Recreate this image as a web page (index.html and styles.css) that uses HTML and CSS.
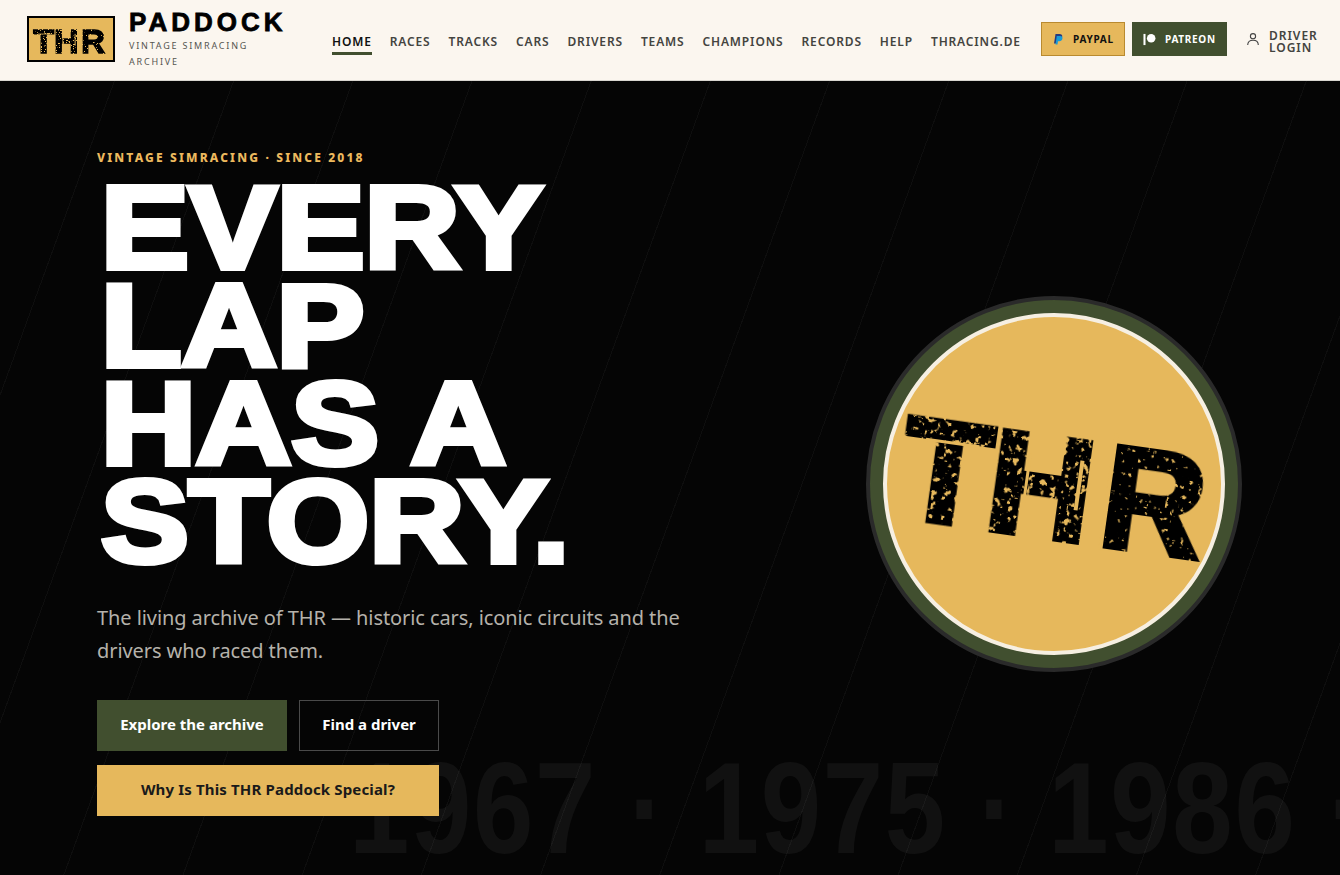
FILE: index.html
```html
<!DOCTYPE html>
<html lang="en">

<head>
    <meta charset="UTF-8">
    <meta name="viewport" content="width=device-width, initial-scale=1.0">
    <title>THR Paddock</title>
    <link rel="stylesheet" href="styles.css">
</head>

<body>
    <!-- shared logo mark + the filters that eat gold specks out of it -->
    <svg class="defs" width="0" height="0">
        <defs>
            <filter id="worn" filterUnits="userSpaceOnUse" x="0" y="80" width="335" height="170">
                <feTurbulence type="fractalNoise" baseFrequency="0.17" numOctaves="3" seed="7" result="noise"/>
                <feColorMatrix in="noise" type="matrix" values="0 0 0 0 0  0 0 0 0 0  0 0 0 0 0  0 0 0 -16 6.2" result="specks"/>
                <feComposite in="SourceGraphic" in2="specks" operator="out"/>
            </filter>
            <filter id="worn-light" filterUnits="userSpaceOnUse" x="0" y="80" width="335" height="170">
                <feTurbulence type="fractalNoise" baseFrequency="0.2" numOctaves="3" seed="21" result="noise"/>
                <feColorMatrix in="noise" type="matrix" values="0 0 0 0 0  0 0 0 0 0  0 0 0 0 0  0 0 0 -16 5.1" result="specks"/>
                <feComposite in="SourceGraphic" in2="specks" operator="out"/>
            </filter>
            <g id="thr-mark">
                <g class="mark-text">
                    <text x="14 102" y="221" filter="url(#worn)">TH</text>
                    <text x="215" y="221" filter="url(#worn-light)">R</text>
                </g>
                <g class="mark-cuts">
                    <rect x="34" y="139" width="54" height="3"/>
                    <rect x="138" y="140" width="3" height="50"/>
                    <rect x="190" y="140" width="4" height="50"/>
                    <rect x="220" y="108" width="4" height="118"/>
                </g>
            </g>
        </defs>
    </svg>

    <header class="topbar">
        <a class="brand" href="#">
            <span class="brand-logo">
                <svg viewBox="0 0 84 42" width="84" height="42">
                    <use href="#thr-mark" transform="translate(1 -17) scale(0.235)"/>
                </svg>
            </span>
            <span class="brand-text">
                <span class="brand-name">PADDOCK</span>
                <span class="brand-tag">VINTAGE SIMRACING ARCHIVE</span>
            </span>
        </a>

        <nav class="main-nav">
            <a class="active" href="#">HOME</a>
            <a href="#">RACES</a>
            <a href="#">TRACKS</a>
            <a href="#">CARS</a>
            <a href="#">DRIVERS</a>
            <a href="#">TEAMS</a>
            <a href="#">CHAMPIONS</a>
            <a href="#">RECORDS</a>
            <a href="#">HELP</a>
            <a href="#">THRACING.DE</a>
        </nav>

        <div class="top-actions">
            <a class="pill pill-paypal" href="#">
                <svg viewBox="0 0 24 24" width="12" height="12">
                    <path fill="#253b80" d="M7 2h8c4 0 6 2 5.400 5.500C19.700 11.500 17 13.500 13 13.500h-3L9 21H4z"/>
                    <path fill="#179bd7" d="M9.500 6h7c3.500 0 5 2 4.400 5-.7 3.500-3 5.500-6.400 5.500h-2.500L11 23H7z"/>
                </svg>
                PAYPAL
            </a>
            <a class="pill pill-patreon" href="#">
                <svg viewBox="0 0 14 14" width="13" height="13">
                    <rect x="0.500" y="1" width="2.200" height="12" fill="#fff"/>
                    <circle cx="8.800" cy="5.600" r="4.600" fill="#fff"/>
                </svg>
                PATREON
            </a>
            <a class="login" href="#">
                <svg viewBox="0 0 14 14" width="14" height="14" fill="none" stroke="#444" stroke-width="1.100">
                    <circle cx="7" cy="4.200" r="2.600"/>
                    <path d="M1.700 13c0-3 2.200-4.800 5.300-4.800s5.300 1.800 5.300 4.800"/>
                </svg>
                <span>DRIVER LOGIN</span>
            </a>
        </div>
    </header>

    <main class="hero">
        <div class="hero-years">1967 · 1975 · 1986 ·</div>

        <div class="hero-copy">
            <p class="eyebrow">VINTAGE SIMRACING · SINCE 2018</p>
            <h1>EVERY<br>LAP<br>HAS A<br>STORY.</h1>
            <p class="lead">The living archive of THR — historic cars, iconic circuits and the drivers who raced them.</p>
            <div class="hero-buttons">
                <a class="btn btn-green" href="#">Explore the archive</a>
                <a class="btn btn-outline" href="#">Find a driver</a>
                <a class="btn btn-gold" href="#">Why Is This THR Paddock Special?</a>
            </div>
        </div>

        <div class="hero-badge">
            <div class="badge-disc">
                <svg viewBox="0 0 335 335" width="335" height="335">
                    <use href="#thr-mark" transform="rotate(8 167 167)"/>
                </svg>
            </div>
        </div>
    </main>
</body>

</html>
```

FILE: styles.css
```css
* {
    box-sizing: border-box;
}

html,
body {
    margin: 0;
    height: 875px;
    overflow: hidden;
}

body {
    font-family: "Noto Sans", "Open Sans", sans-serif;
    background-color: #050505;
    color: #fff;
}

a {
    text-decoration: none;
    color: inherit;
}

.defs {
    position: absolute;
}

/* Logo mark, used in the bar and on the big badge */
.mark-text {
    font-family: "Liberation Sans", sans-serif;
    font-weight: 700;
    font-size: 145px;
    fill: #000;
    stroke: #000;
    stroke-width: 6px;
}

.mark-cuts {
    fill: #e6b85c;
}

/* Top bar */
.topbar {
    display: flex;
    align-items: center;
    height: 81px;
    padding: 0 24px 2px 27px;
    background-color: #fbf6ef;
    border-bottom: 1px solid #d9d6d0;
}

.brand {
    display: flex;
    align-items: center;
    gap: 14px;
    width: 305px;
    flex-shrink: 0;
}

.brand-logo {
    display: block;
    flex-shrink: 0;
    width: 88px;
    height: 46px;
    background-color: #e6b85c;
    border: 2px solid #000;
}

.brand-logo svg {
    display: block;
}

.brand-text {
    display: flex;
    flex-direction: column;
    width: 160px;
}

.brand-name {
    font-family: "Liberation Sans", sans-serif;
    font-weight: 700;
    font-size: 26px;
    line-height: 26px;
    letter-spacing: 4px;
    -webkit-text-stroke: 0.8px #000;
    color: #000;
}

.brand-tag {
    width: 150px;
    margin-top: 3px;
    font-size: 9px;
    line-height: 16px;
    letter-spacing: 1.8px;
    color: #55554f;
}

.main-nav {
    display: flex;
    gap: 18px;
    flex-shrink: 0;
    margin-top: 8px;
}

.main-nav a {
    padding: 2px 0 2px;
    font-size: 12px;
    font-weight: 600;
    line-height: 16px;
    letter-spacing: 0.85px;
    color: #44443f;
    border-bottom: 3px solid transparent;
}

.main-nav a.active {
    color: #111;
    border-bottom-color: #414f2f;
}

.top-actions {
    display: flex;
    align-items: center;
    gap: 7px;
    margin-left: 20px;
}

.pill {
    display: flex;
    align-items: center;
    gap: 9px;
    height: 34px;
    font-size: 10px;
    font-weight: 700;
    letter-spacing: 0.7px;
}

.pill-paypal {
    width: 84px;
    justify-content: center;
    background-color: #e6b85c;
    border: 1px solid #b98a2f;
    color: #111;
}

.pill-patreon {
    width: 95px;
    justify-content: center;
    background-color: #414f2f;
    color: #fff;
}

.login {
    display: flex;
    align-items: center;
    gap: 9px;
    width: 72px;
    margin-left: 12px;
    font-size: 12px;
    font-weight: 600;
    line-height: 12px;
    letter-spacing: 1px;
    color: #44443f;
}

.login svg {
    flex-shrink: 0;
}

.login span {
    margin-top: 6px;
}

/* Hero */
.hero {
    position: relative;
    display: grid;
    grid-template-columns: 1fr 376px;
    align-items: center;
    height: 794px;
    padding: 68px 98px 58px 97px;
    overflow: hidden;
    background-color: #050505;
    background-image: repeating-linear-gradient(110deg, transparent 0, transparent 107px, rgba(255, 255, 255, 0.035) 107px, rgba(255, 255, 255, 0.035) 108px, transparent 108px, transparent 112px);
}

.hero-years {
    position: absolute;
    left: 349px;
    top: 662px;
    font-family: "Liberation Sans", sans-serif;
    font-weight: 700;
    font-size: 130px;
    line-height: 130px;
    letter-spacing: 2px;
    white-space: nowrap;
    color: rgba(255, 255, 255, 0.05);
    transform: scaleX(0.835);
    transform-origin: left center;
}

.hero-copy {
    position: relative;
}

.eyebrow {
    margin: 0 0 13px;
    font-size: 12px;
    font-weight: 800;
    line-height: 16px;
    letter-spacing: 2.15px;
    color: #ecb95e;
}

h1 {
    margin: 0 0 30px 4px;
    font-family: "Liberation Sans", sans-serif;
    font-weight: 700;
    font-size: 116px;
    line-height: 98px;
    color: #fff;
    -webkit-text-stroke: 6px #fff;
    transform: scaleX(1.135);
    transform-origin: left center;
}

.lead {
    width: 600px;
    margin: 0 0 33px;
    font-size: 20px;
    line-height: 33px;
    letter-spacing: -0.08px;
    color: #b5b2ab;
}

.hero-buttons {
    display: flex;
    flex-wrap: wrap;
    gap: 14px 12px;
    width: 342px;
}

.btn {
    display: flex;
    align-items: center;
    justify-content: center;
    height: 51px;
    padding-bottom: 3px;
    font-size: 15px;
    font-weight: 700;
}

.btn-green {
    width: 190px;
    background-color: #414f2f;
    color: #fff;
}

.btn-outline {
    width: 140px;
    border: 1px solid #4a4a4a;
    color: #fff;
}

.btn-gold {
    width: 342px;
    letter-spacing: 0.15px;
    background-color: #e6b85c;
    color: #1a1a1a;
}

/* Round badge: dark rim, green ring, cream edge, gold disc */
.hero-badge {
    width: 376px;
    height: 376px;
    margin-top: 2px;
    padding: 13px;
    border-radius: 50%;
    background-color: #414f2f;
    border: 4px solid #2a2a2a;
}

.badge-disc {
    width: 342px;
    height: 342px;
    border-radius: 50%;
    background-color: #e6b85c;
    border: 4px solid #f6efe2;
    overflow: hidden;
}

.badge-disc svg {
    display: block;
}
```
